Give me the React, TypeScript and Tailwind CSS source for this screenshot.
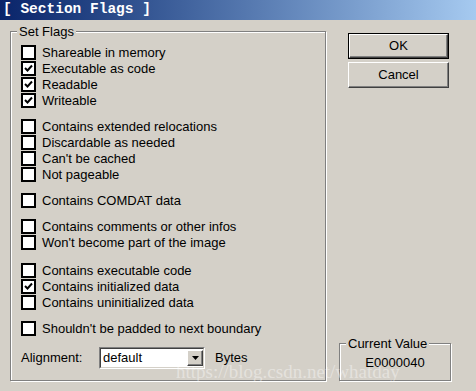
import React from 'react';

type Flag = { label: string; checked?: boolean };

const groups: { gap: string; items: Flag[] }[] = [
  {
    gap: 'mt-0',
    items: [
      { label: 'Shareable in memory' },
      { label: 'Executable as code', checked: true },
      { label: 'Readable', checked: true },
      { label: 'Writeable', checked: true },
    ],
  },
  {
    gap: 'mt-[10px]',
    items: [
      { label: 'Contains extended relocations' },
      { label: 'Discardable as needed' },
      { label: "Can't be cached" },
      { label: 'Not pageable' },
    ],
  },
  { gap: 'mt-[10px]', items: [{ label: 'Contains COMDAT data' }] },
  {
    gap: 'mt-[10px]',
    items: [
      { label: 'Contains comments or other infos' },
      { label: "Won't become part of the image" },
    ],
  },
  {
    gap: 'mt-[12px]',
    items: [
      { label: 'Contains executable code' },
      { label: 'Contains initialized data', checked: true },
      { label: 'Contains uninitialized data' },
    ],
  },
  { gap: 'mt-[10px]', items: [{ label: "Shouldn't be padded to next boundary" }] },
];

function CheckRow({ label, checked }: Flag) {
  return (
    <div className="flex h-[16px] items-center">
      <div className="flex h-[15px] w-[15px] items-center justify-center border-2 border-black bg-white">
        {checked && (
          <svg width="11" height="11" viewBox="0 0 11 11">
            <polyline points="2,5 4.5,7.5 9,2.5" fill="none" stroke="black" strokeWidth="2" />
          </svg>
        )}
      </div>
      <span className="ml-[6px] leading-none">{label}</span>
    </div>
  );
}

function Button({ children, primary }: { children: React.ReactNode; primary?: boolean }) {
  return (
    <div
      className={`flex h-[26px] w-[101px] items-center justify-center bg-[#d4d0c8] ${
        primary ? 'border border-black' : ''
      }`}
    >
      <div className="flex h-full w-full items-center justify-center border border-t-white border-l-white border-r-[#404040] border-b-[#404040] shadow-[inset_-1px_-1px_0_#808080]">
        {children}
      </div>
    </div>
  );
}

export default function App() {
  return (
    <div
      className="relative flex h-[391px] w-[476px] flex-col overflow-hidden bg-[#d4d0c8] text-[13px] text-black"
      style={{ fontFamily: '"Liberation Sans", Arial, sans-serif' }}
    >
      <div className="flex h-[20px] items-center bg-gradient-to-r from-[#0a246a] to-[#a6caf0] pl-[3px]">
        <span
          className="text-[14.5px] font-bold text-white"
          style={{ fontFamily: '"Liberation Mono", "Courier New", monospace' }}
        >
          [ Section Flags ]
        </span>
      </div>

      <div className="flex flex-1">
        {/* Set Flags group */}
        <div className="relative ml-[10px] mt-[11px] h-[350px] w-[316px] border border-[#808080] pl-[10px] pt-[12px] shadow-[inset_1px_1px_0_#fff,1px_1px_0_#fff]">
          <span className="absolute left-[6px] top-[-8px] bg-[#d4d0c8] px-[2px] leading-[15px]">Set Flags</span>
          {groups.map((g, i) => (
            <div key={i} className={g.gap}>
              {g.items.map((f) => (
                <CheckRow key={f.label} {...f} />
              ))}
            </div>
          ))}
          <div className="mt-[11px] flex items-center">
            <span className="w-[78px]">Alignment:</span>
            <div className="flex h-[22px] w-[106px] items-center border border-t-[#808080] border-l-[#808080] border-r-white border-b-white bg-white">
              <div className="flex h-full w-full items-center justify-between border border-t-[#404040] border-l-[#404040] border-r-[#d4d0c8] border-b-[#d4d0c8] pl-[2px]">
                <span>default</span>
                <div className="flex h-[16px] w-[16px] items-center justify-center border border-t-white border-l-white border-r-[#404040] border-b-[#404040] bg-[#d4d0c8] shadow-[inset_-1px_-1px_0_#808080]">
                  <svg width="7" height="4" viewBox="0 0 7 4">
                    <polygon points="0,0 7,0 3.5,4" fill="black" />
                  </svg>
                </div>
              </div>
            </div>
            <span className="ml-[10px]">Bytes</span>
          </div>
        </div>

        {/* Right column */}
        <div className="ml-[13px] flex w-[112px] flex-col">
          <div className="ml-[9px] mt-[13px] flex flex-col gap-[3px]">
            <Button primary>OK</Button>
            <Button>Cancel</Button>
          </div>
          <div className="relative mt-auto mb-[10px] flex h-[38px] items-center justify-center border border-[#808080] pt-[2px] shadow-[inset_1px_1px_0_#fff,1px_1px_0_#fff]">
            <span className="absolute left-[6px] top-[-8px] bg-[#d4d0c8] px-[2px] leading-[15px]">Current Value</span>
            <span>E0000040</span>
          </div>
        </div>
      </div>

      <span
        className="pointer-events-none absolute left-[176px] top-[358px] text-[19px] text-white/40"
        style={{ fontFamily: '"Liberation Serif", serif' }}
      >
        https://blog.csdn.net/whatday
      </span>
    </div>
  );
}
